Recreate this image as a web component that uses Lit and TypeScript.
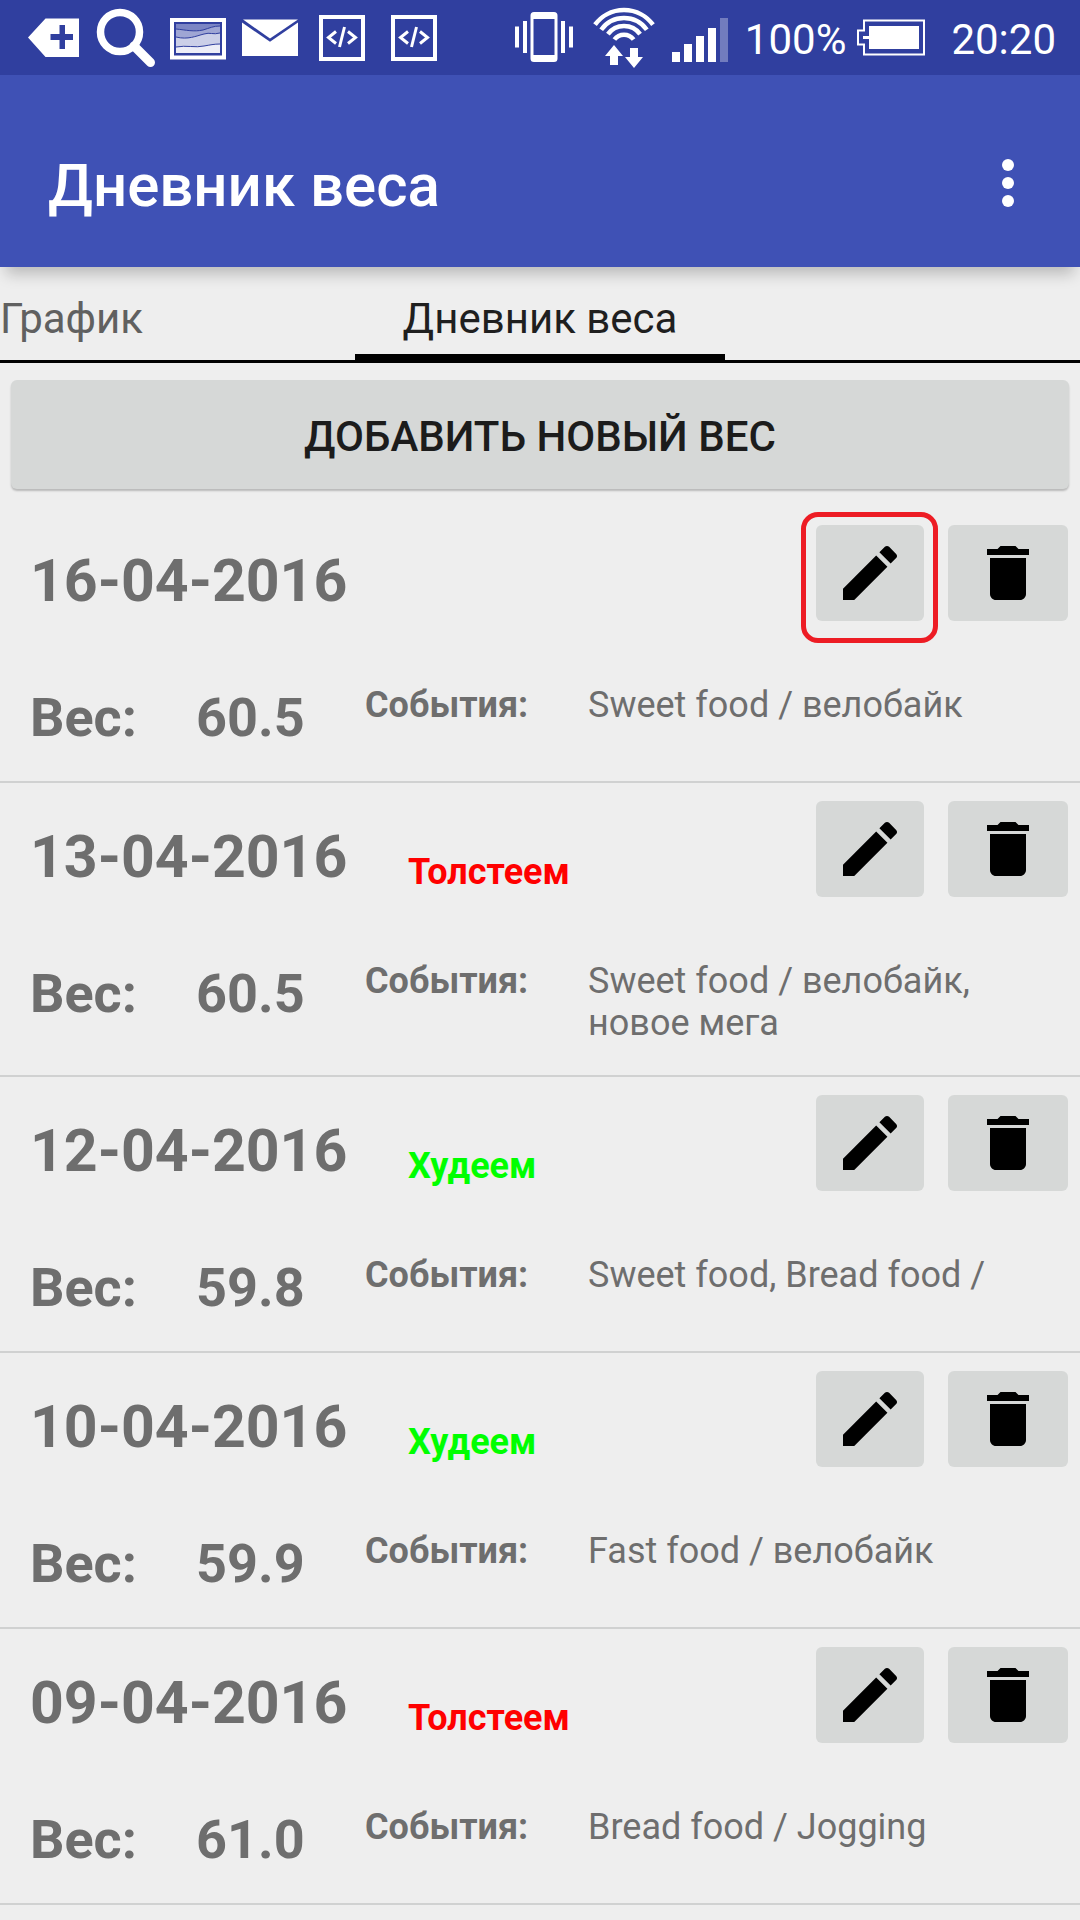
import { LitElement, html, css, nothing } from "lit";
import { customElement, property, state } from "lit/decorators.js";

type Trend = "up" | "down" | "none";

interface Entry {
  date: string;
  weight: string;
  events: string;
  trend: Trend;
  marked?: boolean;
}

const ENTRIES: Entry[] = [
  { date: "16-04-2016", weight: "60.5", events: "Sweet food / велобайк", trend: "none", marked: true },
  { date: "13-04-2016", weight: "60.5", events: "Sweet food / велобайк, новое мега", trend: "up" },
  { date: "12-04-2016", weight: "59.8", events: "Sweet food, Bread food /", trend: "down" },
  { date: "10-04-2016", weight: "59.9", events: "Fast food / велобайк", trend: "down" },
  { date: "09-04-2016", weight: "61.0", events: "Bread food / Jogging", trend: "up" },
];

const TREND_TEXT: Record<Trend, string> = { up: "Толстеем", down: "Худеем", none: "" };

const codeIcon = html`<svg width="72" height="75" viewBox="306 0 72 75" aria-hidden="true">
  <rect x="321" y="17" width="42" height="42" fill="none" stroke="#fff" stroke-width="4" />
  <path d="M336 31.5L328.500 37.500L336 43.500M348 31.500L355.500 37.500L348 43.500" fill="none" stroke="#fff" stroke-width="3" />
  <path d="M344.500 27L339.500 47" stroke="#fff" stroke-width="3" />
</svg>`;

@customElement("status-bar")
export class StatusBar extends LitElement {
  static styles = css`
    :host {
      display: flex;
      justify-content: space-between;
      height: 75px;
      padding: 0 24px 0 18px;
      background: #303f9f;
      color: #fff;
      font-size: 42px;
      line-height: 80px;
    }
    .group {
      display: flex;
    }
    .system {
      gap: 8px;
    }
    svg {
      display: block;
      flex: none;
    }
  `;

  render() {
    return html`
      <div class="group">
        <svg width="72" height="75" viewBox="18 0 72 75" aria-hidden="true">
          <path fill="#fff" fill-rule="evenodd" d="M28 37.500L45.500 18.500H79V57H45.500ZM59.500 25V34H50.500V40H59.500V49H65V40H73V34H65V25Z" />
        </svg>
        <svg width="72" height="75" viewBox="90 0 72 75" aria-hidden="true" fill="none" stroke="#fff">
          <circle cx="120" cy="32" r="19.500" stroke-width="7.500" />
          <path d="M134 46L150.500 62.500" stroke-width="9" stroke-linecap="round" />
        </svg>
        <svg width="72" height="75" viewBox="162 0 72 75" aria-hidden="true">
          <rect x="172" y="20" width="52" height="37.500" fill="none" stroke="#fff" stroke-width="4" />
          <rect x="176" y="24" width="44" height="29" fill="#7c86c4" />
          <path d="M176 29C186 30 194 32 203 30C210 28 213 26 220 26V53H176Z" fill="#9fa6d4" />
          <path d="M176 37C188 40 196 36 204 34C210 32 213 35 220 33V53H176Z" fill="#cbcfe8" />
          <path d="M176 47C186 45 196 48 204 46C210 45 214 44 220 44V53H176Z" fill="#ecedf7" />
          <path d="M176 29C186 30 194 32 203 30C210 28 213 26 220 26M176 37C188 40 196 36 204 34C210 32 213 35 220 33M176 47C186 45 196 48 204 46C210 45 214 44 220 44" fill="none" stroke="#303f9f" stroke-width="1" />
        </svg>
        <svg width="72" height="75" viewBox="234 0 72 75" aria-hidden="true" fill="#fff">
          <path d="M243 19.500H298L270 38.500Z" />
          <path d="M242 22.500L270 41.800L298 22.500V56H242Z" />
        </svg>
        ${codeIcon}${codeIcon}
      </div>
      <div class="group system">
        <svg width="72" height="75" viewBox="509 0 72 75" aria-hidden="true" fill="#fff">
          <path fill-rule="evenodd" d="M534 12H554Q557.500 12 557.500 15.500V58.500Q557.500 62 554 62H534Q530.500 62 530.500 58.500V15.500Q530.500 12 534 12ZM533.500 19V55H554.500V19Z" />
          <path d="M515 26.500H519V47.500H515ZM523 21H527V53H523ZM561 21H565V53H561ZM569 26.500H573V47.500H569Z" />
        </svg>
        <svg width="72" height="75" viewBox="589 0 72 75" aria-hidden="true">
          <g fill="none" stroke="#fff" stroke-width="4.500">
            <path d="M595 24.700A36 36 0 0 1 653 24.700" />
            <path d="M601.200 29.700A28 28 0 0 1 646.800 29.700" />
            <path d="M607.900 34.100A20 20 0 0 1 640.100 34.100" />
            <path d="M614.400 39.500A12 12 0 0 1 633.600 39.500" />
          </g>
          <path fill="#fff" d="M614 45L623 56H618V65H610V56H605ZM630 48H638V57H643L634 68L625 57H630Z" />
        </svg>
        <svg width="68" height="75" viewBox="669 0 68 75" aria-hidden="true" fill="#fff">
          <path d="M672 52H680V62H672ZM684 44H692V62H684ZM696 36H704V62H696ZM708 28H716V62H708Z" />
          <rect x="720" y="18" width="8" height="44" opacity=".32" />
        </svg>
        <span>100%</span>
        <svg width="89" height="75" viewBox="854 0 89 75" aria-hidden="true">
          <path fill="none" stroke="#fff" stroke-width="2" d="M864 20.500H924V54.500H864V44.500H858V30.500H864Z" />
          <path fill="#fff" d="M869 26H919V49H869V39H863V36H869Z" />
        </svg>
        <span>20:20</span>
      </div>
    `;
  }
}

@customElement("weight-entry")
export class WeightEntry extends LitElement {
  @property({ attribute: false }) entry!: Entry;

  static styles = css`
    :host {
      display: block;
      padding: 18px 12px 31px 30px;
      border-bottom: 2px solid #d0d1d1;
      color: #6e6e6e;
    }
    .head,
    .details {
      display: flex;
      align-items: flex-start;
    }
    .details {
      margin-top: 63px;
    }
    .date {
      width: 378px;
      margin: 20px 0 0;
      font-size: 59px;
      line-height: 72px;
      font-weight: 700;
    }
    .trend {
      flex: 1;
      padding-top: 50px;
      font-size: 36px;
      line-height: 42px;
      font-weight: 700;
    }
    .up {
      color: #f00;
    }
    .down {
      color: #0f0;
    }
    .actions {
      display: flex;
      gap: 24px;
    }
    .slot {
      position: relative;
      display: flex;
    }
    .marked::after {
      content: "";
      position: absolute;
      inset: -13px -14px -22px -15px;
      border: 5px solid #ed1c24;
      border-radius: 17px;
      pointer-events: none;
    }
    button {
      padding: 12px 18px;
      border: 0;
      border-radius: 6px;
      background: #d6d8d7;
      cursor: pointer;
    }
    .delete {
      padding: 12px 24px;
    }
    svg {
      display: block;
    }
    .weight {
      padding-top: 2px;
      font-size: 54px;
      line-height: 64px;
      font-weight: 700;
    }
    .name {
      width: 166px;
    }
    .value {
      width: 169px;
    }
    .caption {
      width: 223px;
      font-size: 36px;
      line-height: 42px;
      font-weight: 700;
    }
    .events {
      flex: 1;
      font-size: 36px;
      line-height: 42px;
    }
  `;

  render() {
    const { date, weight, events, trend, marked } = this.entry;
    return html`
      <div class="head">
        <h2 class="date">${date}</h2>
        <span class="trend ${trend}">${TREND_TEXT[trend] || nothing}</span>
        <div class="actions">
          <span class="slot ${marked ? "marked" : ""}">
            <button type="button" aria-label="Изменить">
              <svg width="72" height="72" viewBox="0 0 24 24">
                <path d="M3 17.250V21h3.750L17.810 9.940l-3.750-3.750L3 17.250zM20.710 7.040c.39-.39.39-1.020 0-1.410l-2.340-2.340c-.39-.39-1.020-.39-1.410 0l-1.830 1.830 3.750 3.750 1.830-1.830z" />
              </svg>
            </button>
          </span>
          <button type="button" class="delete" aria-label="Удалить">
            <svg width="72" height="72" viewBox="0 0 24 24">
              <path d="M6 19c0 1.100.9 2 2 2h8c1.100 0 2-.9 2-2V7H6v12zM19 4h-3.500l-1-1h-5l-1 1H5v2h14V4z" />
            </svg>
          </button>
        </div>
      </div>
      <div class="details">
        <span class="weight name">Вес:</span>
        <span class="weight value">${weight}</span>
        <span class="caption">События:</span>
        <span class="events">${events}</span>
      </div>
    `;
  }
}

@customElement("app-root")
export class AppRoot extends LitElement {
  @state() private tab = "diary";

  static styles = css`
    :host {
      display: block;
      min-height: 100vh;
      background: #eee;
      font-family: Roboto, "Noto Sans", sans-serif;
    }
    .appbar {
      display: flex;
      align-items: center;
      justify-content: space-between;
      height: 192px;
      padding: 24px 36px 0 48px;
      box-sizing: border-box;
      background: #3f51b5;
      color: #fff;
      box-shadow: 0 13px 14px -6px rgba(0, 0, 0, 0.22);
    }
    h1 {
      margin: 0;
      padding-top: 6px;
      font-size: 60px;
      line-height: 70px;
      font-weight: 500;
    }
    button {
      border: 0;
      padding: 0;
      background: none;
      font-family: inherit;
      cursor: pointer;
    }
    .more,
    .more svg {
      display: block;
    }
    .tabs {
      display: grid;
      grid-template-columns: 1fr auto 1fr;
      height: 96px;
      box-sizing: border-box;
      border-bottom: 3px solid #000;
    }
    .tab {
      justify-self: start;
      padding-top: 10px;
      font-size: 42px;
      line-height: 48px;
      color: #606060;
    }
    .tab[aria-selected="true"] {
      padding: 10px 48px 0;
      color: #1f1f1f;
      box-shadow: inset 0 -6px #000;
    }
    .add {
      display: block;
      width: calc(100% - 22px);
      margin: 17px 11px 18px;
      padding: 32px 12px 28px;
      border-radius: 6px;
      background: #d6d8d7;
      box-shadow: 0 2px 2px rgba(0, 0, 0, 0.22);
      color: #1c1c1c;
      font-size: 42px;
      line-height: 49px;
      font-weight: 500;
      text-transform: uppercase;
    }
    ul {
      margin: 0;
      padding: 0;
      list-style: none;
    }
  `;

  private renderTab(id: string, label: string) {
    return html`<button
      class="tab"
      type="button"
      role="tab"
      aria-selected=${this.tab === id ? "true" : "false"}
      @click=${() => (this.tab = id)}
    >${label}</button>`;
  }

  render() {
    return html`
      <status-bar></status-bar>
      <header class="appbar">
        <h1>Дневник веса</h1>
        <button class="more" type="button" aria-label="Меню">
          <svg width="72" height="72" viewBox="0 0 72 72" fill="#fff">
            <circle cx="36" cy="18" r="6" />
            <circle cx="36" cy="36" r="6" />
            <circle cx="36" cy="54" r="6" />
          </svg>
        </button>
      </header>
      <div class="tabs" role="tablist">
        ${this.renderTab("chart", "График")}${this.renderTab("diary", "Дневник веса")}
      </div>
      <main>
        <button class="add" type="button">Добавить новый вес</button>
        <ul>
          ${ENTRIES.map((e) => html`<li><weight-entry .entry=${e}></weight-entry></li>`)}
        </ul>
      </main>
    `;
  }
}
